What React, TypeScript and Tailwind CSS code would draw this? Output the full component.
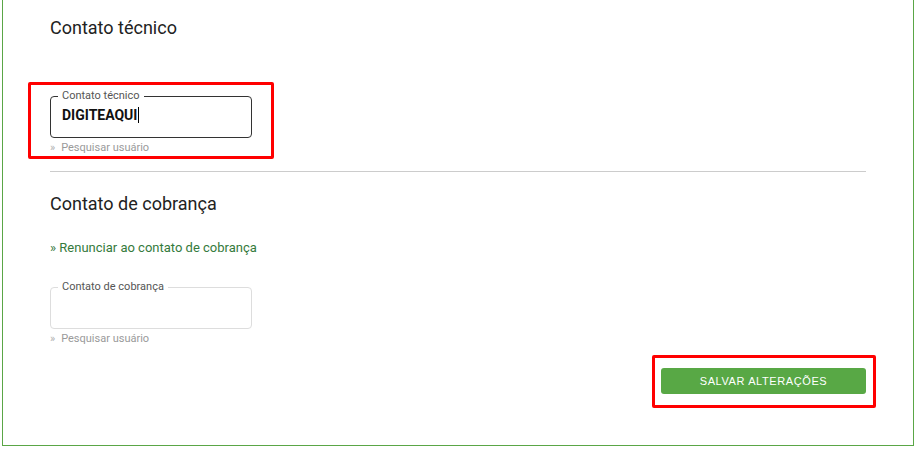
const Highlight = ({ className }: { className: string }) => (
    <span className={`pointer-events-none absolute border-[3px] border-[#ff0000] rounded-[2px] ${className}`} />
);

interface IContactField {
    label: string;
    value?: string;
    active?: boolean;
}

const ContactField = ({ label, value, active }: IContactField) => (
    <div className="w-[202px]">
        <fieldset
            className={`rounded-[4px] border pl-[7px] pr-2 pb-[12px] ${active ? "border-[#333333]" : "border-[#dddddd]"}`}
        >
            <legend className="px-1 text-[11px] leading-[12px] text-[#555555]">{label}</legend>
            <div className="mt-[3px] flex h-5 items-center pl-1 text-[14px] font-bold leading-5 text-[#111111]">
                {value}
                {active && <span className="ml-[1px] inline-block h-4 w-px bg-black" />}
            </div>
        </fieldset>
        <a className="mt-[3px] block text-[11px] leading-[14px] text-[#9a9a9a]">
            <span className="mr-[6px] text-[#b0b0b0]">»</span>Pesquisar usuário
        </a>
    </div>
);

const App = () => {
    return (
        <div className="min-h-[460px] bg-white font-['Roboto',sans-serif]">
            <div className="ml-[2px] w-[912px] border-x border-b border-[#5aa646] px-[47px] pt-4 pb-[51px]">
                <h2 className="text-[18px] leading-6 text-[#222222]">Contato técnico</h2>

                <div className="relative mt-[50px] w-[202px]">
                    <ContactField label="Contato técnico" value="DIGITEAQUI" active />
                    <Highlight className="-left-[22px] -top-[8px] h-[77px] w-[246px]" />
                </div>

                <div className="mt-[16px] h-px bg-[#cccccc]" />

                <h2 className="mt-5 text-[18px] leading-6 text-[#222222]">Contato de cobrança</h2>

                <a className="mt-[23px] block text-[13px] leading-[18px] text-[#357a3c]">
                    » Renunciar ao contato de cobrança
                </a>

                <div className="mt-[24px]">
                    <ContactField label="Contato de cobrança" />
                </div>

                <div className="mt-[22px] flex justify-end">
                    <div className="relative">
                        <button className="h-[26px] w-[205px] rounded-[3px] bg-[#58a845] font-['Liberation_Sans',sans-serif] text-[11px] tracking-[0.6px] text-white">
                            SALVAR ALTERAÇÕES
                        </button>
                        <Highlight className="-left-[9px] -top-[13px] h-[53px] w-[224px]" />
                    </div>
                </div>
            </div>
        </div>
    );
};

export default App;
